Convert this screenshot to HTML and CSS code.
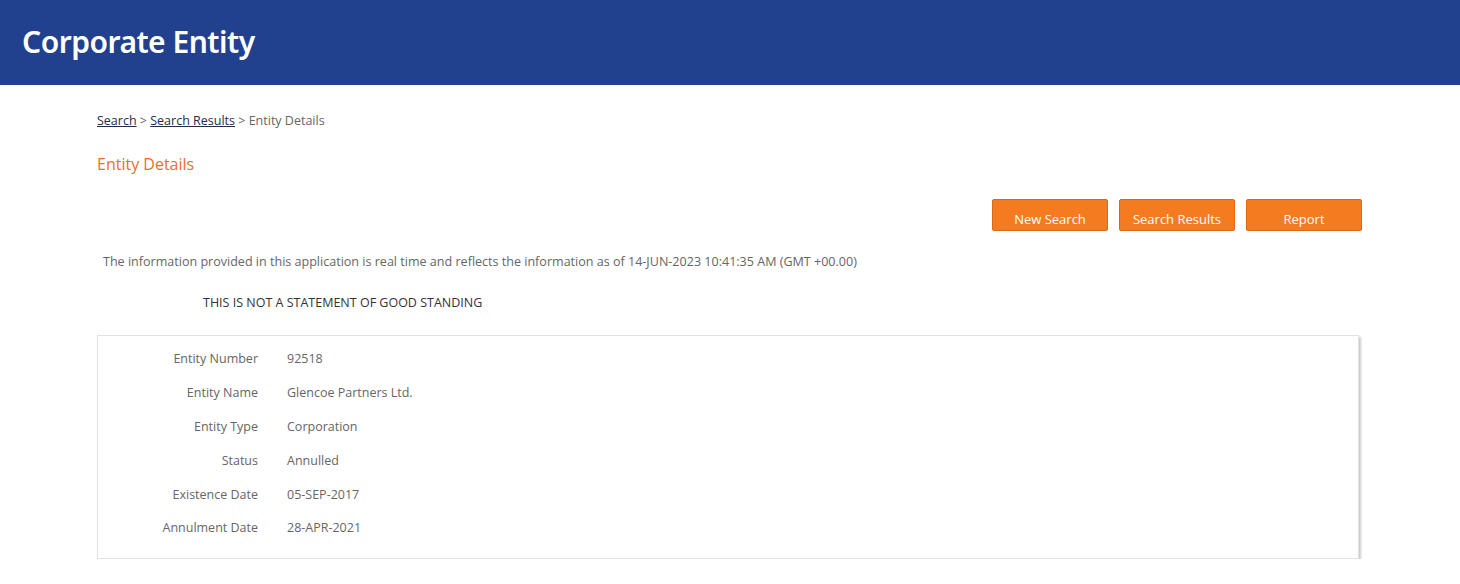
FILE: index.html
```html
<!DOCTYPE html>
<html>
<head>
<meta charset="utf-8">
<link rel="stylesheet" href="styles.css">
</head>
<body>
<header class="topbar"><h1 class="title">Corporate Entity</h1></header>
<main class="content">
  <nav class="crumbs"><a href="#">Search</a> &gt; <a href="#">Search Results</a> &gt; Entity Details</nav>
  <h2 class="heading">Entity Details</h2>
  <div class="actions">
    <button class="btn">New Search</button>
    <button class="btn">Search Results</button>
    <button class="btn">Report</button>
  </div>
  <p class="info">The information provided in this application is real time and reflects the information as of 14-JUN-2023 10:41:35 AM (GMT +00.00)</p>
  <p class="notice">THIS IS NOT A STATEMENT OF GOOD STANDING</p>
  <section class="card">
    <div class="row"><span class="label">Entity Number</span><span class="value">92518</span></div>
    <div class="row"><span class="label">Entity Name</span><span class="value">Glencoe Partners Ltd.</span></div>
    <div class="row"><span class="label">Entity Type</span><span class="value">Corporation</span></div>
    <div class="row"><span class="label">Status</span><span class="value">Annulled</span></div>
    <div class="row"><span class="label">Existence Date</span><span class="value">05-SEP-2017</span></div>
    <div class="row"><span class="label">Annulment Date</span><span class="value">28-APR-2021</span></div>
  </section>
</main>
</body>
</html>
```
FILE: styles.css
```css
* { box-sizing: border-box; }
body {
  margin: 0;
  font-family: "Open Sans", "Liberation Sans", sans-serif;
  font-weight: 400;
  color: #666;
  background: #fff;
}
.topbar {
  background: #21418f;
  height: 85px;
  display: flex;
  align-items: center;
  padding: 0 0 2px 22px;
}
.title {
  margin: 0;
  color: #fff;
  font-family: "Noto Sans", "Open Sans", sans-serif;
  font-weight: 600;
  font-size: 30px;
  letter-spacing: -0.5px;
}
.content {
  padding: 0 98px 0 97px;
}
.crumbs {
  margin-top: 27px;
  font-size: 12.5px;
  line-height: 18px;
  color: #666;
}
.crumbs a { color: #1c2e4a; }
.heading {
  margin: 23px 0 0;
  font-size: 16px;
  font-weight: 400;
  color: #e8702a;
  line-height: 22px;
}
.actions {
  display: flex;
  justify-content: flex-end;
  gap: 11px;
  margin-top: 24px;
}
.btn {
  width: 116px;
  height: 32px;
  background: #f47b20;
  border: 1px solid #d9691a;
  border-radius: 2px;
  color: #fff;
  font-family: "Open Sans", sans-serif;
  font-weight: 400;
  font-size: 13px;
  padding-top: 8px;
}
.info {
  margin: 22px 0 0 6px;
  font-size: 12.55px;
  line-height: 18px;
  color: #666;
}
.notice {
  margin: 23px 0 0 106px;
  font-size: 12.5px;
  line-height: 18px;
  color: #333;
}
.card {
  margin-top: 23px;
  width: 1262px;
  border: 1px solid #e2e2e2;
  box-shadow: 2px 2px 2px #ccc;
  padding: 6px 0 13px;
}
.row {
  display: flex;
  align-items: center;
  height: 33.8px;
  font-size: 12.5px;
}
.label {
  width: 160px;
  text-align: right;
  color: #666;
}
.value {
  margin-left: 29px;
  color: #666;
}
```
